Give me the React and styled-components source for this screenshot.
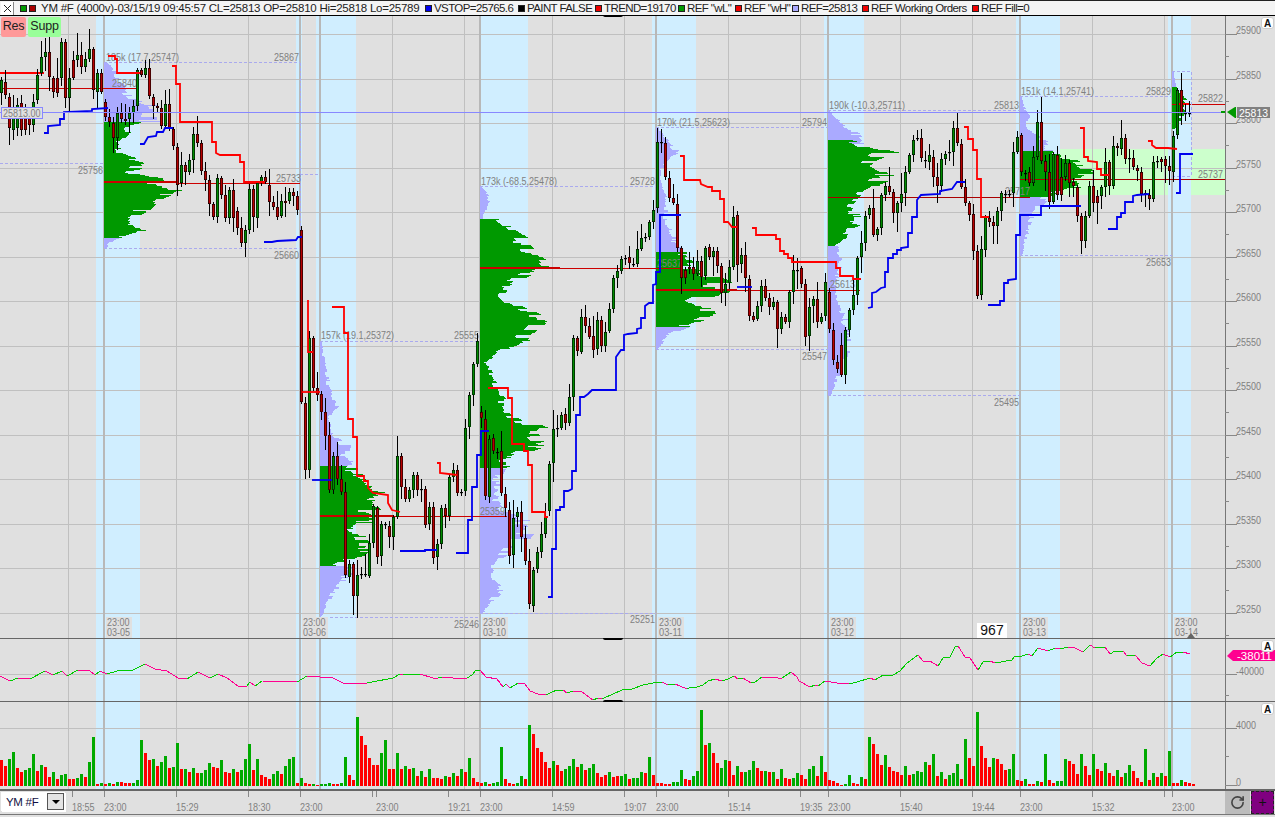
import React from "react";
import styled, { createGlobalStyle } from "styled-components";
import { RotateCw } from "lucide-react";

const GlobalStyle = createGlobalStyle`
  html, body { margin: 0; padding: 0; background: #e0e0e0; overflow: hidden; }
  #root { width: 1275px; height: 817px; }
`;

const FONT = `"Liberation Sans", Arial, sans-serif`;
const PLOT_W = 1225;
const AXIS_W = 50;

const Page = styled.div`
  width: 1275px;
  height: 817px;
  display: flex;
  flex-direction: column;
  background: #e0e0e0;
  font-family: ${FONT};
`;

const TitleBar = styled.div`
  height: 14px;
  flex: none;
  display: flex;
  align-items: center;
  background: #f4f4f4;
  border-top: 1px solid #222;
  border-bottom: 1px solid #000;
  font-size: 11.5px;
  color: #222;
  white-space: nowrap;
`;

const CloseBox = styled.div`
  width: 13px;
  height: 13px;
  margin: 0 6px 0 1px;
  box-sizing: border-box;
  border-right: 1px solid #888;
  background: #fff;
  display: flex;
  align-items: center;
  justify-content: center;
`;

const Instrument = styled.div`
  display: flex;
  align-items: center;
  width: 405px;
  flex: none;
  letter-spacing: -0.25px;
`;

const Legend = styled.div`
  display: flex;
  align-items: center;
  width: ${(p) => p.$width}px;
  flex: none;
  letter-spacing: -0.6px;
`;

const Swatch = styled.span`
  display: inline-block;
  box-sizing: border-box;
  width: 7px;
  height: 7px;
  border: 1px solid #222;
  background: ${(p) => p.$color};
  margin-right: ${(p) => p.$right || 2}px;
`;

const PaneRow = styled.div`
  height: ${(p) => p.$height}px;
  flex: none;
  display: flex;
  box-sizing: border-box;
  border-top: ${(p) => (p.$line ? "1px solid #666" : "0")};
`;

const Plot = styled.div`
  position: relative;
  width: ${PLOT_W}px;
  height: 100%;
  flex: none;
`;

const Axis = styled.div`
  position: relative;
  width: ${AXIS_W}px;
  height: 100%;
  flex: none;
  box-sizing: border-box;
`;

const Drawing = styled.svg`
  display: block;
  width: 100%;
  height: 100%;
  overflow: hidden;
  font-family: ${FONT};
`;

const PriceLabel = styled.text`
  font-size: 11px;
  fill: ${(p) => p.$color || "#808080"};
`;

const AutoButton = styled.div`
  position: absolute;
  top: 1px;
  right: 1px;
  width: 13px;
  height: 12px;
  border-radius: 3px;
  background: #fff;
  border: 1px solid #ccc;
  box-sizing: border-box;
  font-size: 10px;
  font-weight: bold;
  line-height: 11px;
  text-align: center;
  color: #111;
`;

const LevelButtons = styled.div`
  position: absolute;
  left: 1px;
  top: 1px;
  display: flex;
  gap: 2px;
`;

const LevelButton = styled.div`
  width: ${(p) => p.$width}px;
  height: 20px;
  border-radius: 2px;
  background: ${(p) => p.$color};
  color: #222;
  font-size: 12.5px;
  letter-spacing: -0.2px;
  line-height: 19px;
  text-align: center;
`;

const Counter = styled.div`
  position: absolute;
  left: 977px;
  bottom: 0;
  width: 30px;
  height: 15px;
  background: #fff;
  color: #111;
  font-size: 14px;
  line-height: 15px;
  text-align: center;
`;

const Grip = styled.div`
  position: absolute;
  left: 603px;
  ${(p) => (p.$bottom ? "bottom: -1px" : "top: -1px")};
  width: 20px;
  height: 2px;
  background: #000;
  border-radius: ${(p) => (p.$bottom ? "3px 3px 0 0" : "0 0 3px 3px")};
`;

const TimeRow = styled.div`
  height: 26px;
  flex: none;
  display: flex;
  box-sizing: border-box;
  border-top: 2px solid #666;
  border-bottom: 1px solid #777;
`;

const SymbolBox = styled.div`
  width: 64px;
  flex: none;
  box-sizing: border-box;
  margin: 1px 1px 3px 1px;
  border: 1px solid #fff;
  box-shadow: 1px 1px 0 #fff;
  background: #fff;
  display: flex;
  align-items: center;
  justify-content: space-between;
  font-size: 11.5px;
  letter-spacing: -0.3px;
  color: #114;
`;

const SymbolName = styled.span`
  padding-left: 4px;
`;

const SymbolArrow = styled.div`
  width: 17px;
  height: 17px;
  box-sizing: border-box;
  background: #e4e4e4;
  border: 1px solid #555;
  display: flex;
  align-items: center;
  justify-content: center;
  &::after {
    content: "";
    border-left: 4px solid transparent;
    border-right: 4px solid transparent;
    border-top: 4px solid #000;
  }
`;

const TimeAxis = styled.div`
  width: ${PLOT_W - 66}px;
  flex: none;
`;

const RefreshButton = styled.div`
  width: 25px;
  flex: none;
  background: #bcbcbc;
  display: flex;
  align-items: center;
  justify-content: center;
  color: #444;
`;

const PlusButton = styled.div`
  width: 23px;
  flex: none;
  margin-left: 1px;
  box-sizing: border-box;
  background: #800080;
  border: 1px dashed #222;
  color: #111;
  font-size: 14px;
  line-height: 21px;
  text-align: center;
`;

// tiny seeded random so every render gives the same chart
const makeRng = (seed) => () => {
  seed = (seed * 16807) % 2147483647;
  return seed / 2147483647;
};

// candle bodies, read per zoomed section: y = y0 + z / 3
const CANDLE_SECTIONS = [
  {
    y0: 30,
    bars: `g150-190 r155-195 r200-295 g240-300 g225-295 r220-300 r235-300 r255-285 g215-285 g135-210 g80-130 g65-80 r65-140 r145-185 r145-190 g35-145 r35-205 g145-205 r90-145 g75-90 r75-110 g88-110 g58-88 r58-180 g130-185 r130-185 r215-260 r262-275 r278-325 g250-325 r250-268 r268-272 g250-268 g228-250 g120-228 r120-135 g113-135 r113-198 r200-228 r228-235 r235-288 g222-288 r222-295 r298-347 r350-465 g405-458 r405-425 g390-425 g312-390 r312-338 r340-422 r423-450 r450-522 r522-560 g445-560 r445-495 r495-565 g480-565 r480-565 r543-595 r595-640 g600-640 g478-600 r478-562 g460-565 g442-460 r442-455 r465-515 r515-530 r530-560 g513-558 r513-520 g487-513 r487-497 r497-540`,
  },
  {
    y0: 300,
    bars: `r-210-305 r308-510 g115-510 r115-265 r265-285 r283-335 r335-408 r405-570 g468-570 r468-536 r538-575 r577-825 g793-830 r793-887 g825-887 d823 d823 g730-827 g618-730 r625-770 g672-768 d672 r678-710 g650-710 g468-650 r468-560 r562-597 g570-597 g525-570 r525-570 d567 r567-675 g622-672 r622-775 g733-772 g625-733 r625-648 g532-648 g510-532 r510-578 d575 g385-572 g285-382 g193-285 g123-193 r337-355 r357-587 g418-590 r415-452 d455 r453-580 r583-625 r630-768 g655-765 g637-650 r637-712 r715-782 r783-913 g810-917 g757-808 g703-755 g650-702 g492-632 g388-490 d385 g345-383 r342-368 g292-368 g115-290 r115-152`,
  },
  {
    y0: 120,
    bars: `g590-695 r590-617 r618-650 r648-690 g600-688 r600-678 g637-678 g567-632 g475-567 g453-473 g418-452 d413 r411-428 d431 g388-431 g355-386 d350 g307-350 g270-305 g65-265 d65 r70-172 r175-233 r233-248 r253-385 r385-473 r450-475 r442-448 r442-463 g424-463 r424-470 g385-468 r382-410 g394-410 r394-437 r437-520 g493-520 g442-490 g290-440 r286-435 g405-433 r405-473 r478-587 r589-599 g558-598 g498-557 r498-533 r535-562 g547-562 r547-628 g590-628 r590-606 g517-605 g451-515 d449 r445-492 r492-650 g562-648 g538-557 r538-605 g590-605 g487-587 r517-628 r630-720 r727-748`,
  },
  {
    y0: 100,
    bars: `r735-825 g690-825 g630-690 g585-630 g475-585 g430-472 g347-428 g325-345 r325-405 g388-405 g285-385 g258-285 r258-275 r277-338 g310-340 g283-310 g217-278 g165-215 g120-165 d115 r115-175 d180 g165-185 r170-230 r232-257 g178-257 g162-178 d157 g85-155 r85-130 r133-260 r262-308 r310-345 r343-452 r453-587 g448-585 g352-450 r353-365 r367-377 g333-377 g280-332 d282 d282 g157-280 g112-155 r105-215 d218 r217-250 g172-250 g67-170 r67-182 r183-215 r217-306 g163-306 r165-285 r232-285 g190-232 r190-248 r246-258 r262-347 r349-422 g349-422 g258-347 r258-310 r288-310 g262-288 g187-260 r187-258 g138-258 r138-145 g115-148 r115-178 d173 r173-202 r205-212 r217-282 d280 r286-296 g187-296 d183 r178-186 r178-198 r198-212 g108-215 g-30-105 r-30-39 d40 d40`,
  },
];

// the few wicks that stick out far enough to be worth placing by hand
const WICK_OVERRIDE = {
  22: { high: 29 },
  11: { high: 38 },
  15: { high: 38 },
  88: { low: 615 },
  133: { low: 612 },
  165: { high: 129 },
  194: { low: 348 },
  239: { high: 113 },
  245: { low: 300 },
  260: { high: 97 },
  270: { low: 254 },
  295: { high: 73 },
};

const buildCandles = () => {
  const rng = makeRng(4711);
  const out = [];
  CANDLE_SECTIONS.forEach(({ y0, bars }) => {
    bars.split(/\s+/).forEach((token) => {
      const m = token.match(/^([grd])(-?\d+)(?:-(-?\d+))?$/);
      const top = y0 + Number(m[2]) / 3;
      const bottom = m[3] ? y0 + Number(m[3]) / 3 : top + 1;
      const i = out.length;
      out.push({
        x: 4 * i + 1,
        top: Math.round(top),
        bottom: Math.round(bottom),
        color: m[1] === "g" ? "#008c00" : m[1] === "r" ? "#b80000" : "#000",
        high: Math.round(top - 2 - rng() * rng() * 22),
        low: Math.round(bottom + 2 + rng() * rng() * 22),
        ...WICK_OVERRIDE[i],
      });
    });
  });
  return out;
};

const CANDLES = buildCandles();

const VOLUME = `r26 r20 g27 g34 r18 r14 g16 g18 g32 r15 g21 r19 r9 g14 r7 g11 g12 r7 r7 g8 g12 r9 g24 g49 r2 g3 r2 g3 r2 g4 r4 r3 r3 g3 g6 g46 r33 r26 g27 r20 g24 g30 r18 g19 g43 r17 g17 r14 g18 r13 g13 g16 g23 r19 r18 g26 r14 r13 g17 r14 g16 g27 g42 r16 g27 r11 r9 r7 g12 g15 r12 g20 g27 g29 r3 g8 r3 r2 g2 r1 g2 g2 g3 r2 r2 g3 g29 r11 r6 g69 r50 r41 r28 r21 r21 g33 g46 r17 r17 g33 r17 g20 r17 g18 r10
g15 r9 g17 r8 r8 r7 g10 r9 g13 r10 g17 r14 g28 r8 r4 r3 g4 r2 g3 g4 g39 r7 r3 r2 g3 g10 r7 g61 r52 r38 r34 r24 r18 g25 r21 r15 g17 g20 g27 r19 g22 r16 g18 g22 r13 r9 r11 g14 r9 r10 g10 g12 r7 g8 g8 g14 r13 g29 r11 r3 r3 r2 r2 g4 g4 g16 r7 r6 g10 g15 g76 r41 g43 r33 r23 g18 g26 r25 r11 g20 r14 g14 g16 g25 r18 r15 g15 r14 g14 r7 g17 r8 r7 g8 g13 r11 r7 g17 g20 r10 g30 r14 r6 r5 r3 r1 g2 g11 r3 r2
g9 r7 g49 r42 r32 r21 g31 r19 r15 r14 r11 g20 r11 g12 g15 g14 g24 r21 g32 r10 g14 r7 g11 g13 g22 r7 g47 r28 r20 g74 r40 r28 r19 g28 r27 r22 r16 g17 g32 r6 r5 g7 r2 r2 g5 r4 g32 r6 r3 g5 g5 g27 r25 r22 r12 g32 r20 r11 g32 r17 r15 g23 r13 r10 g16 r9 g13 g21 r15 r8 r4 g37 r6 g13 r9 g13 r10 g35 r3 r3 g6 r4 r3 r2`
  .split(/\s+/)
  .map((t) => ({ color: t[0] === "g" ? "#00aa00" : "#ff0000", h: Number(t.slice(1)) }));

// middle stretch of the line, taken from a crop: x = 400 + z / 3, y = 655 + z / 3
const RSI_MIDDLE = [
  [0, 58], [8, 60], [35, 56], [60, 56], [100, 68], [115, 70], [125, 65], [160, 70], [185, 68], [200, 70], [215, 60], [228, 46], [240, 46], [258, 66],
  [290, 72], [308, 97], [318, 88], [330, 100], [355, 85], [375, 87], [390, 108], [415, 118], [437, 120], [455, 110], [470, 106], [488, 106], [500, 115],
  [520, 107], [545, 112], [580, 135], [595, 130], [607, 133], [640, 118], [665, 104], [695, 103], [730, 90], [760, 83], [785, 80], [805, 90], [825, 88],
  [860, 103], [872, 95], [890, 97], [910, 90], [925, 77], [945, 73], [965, 78], [985, 72], [1003, 62], [1015, 73], [1030, 68], [1052, 85], [1065, 80],
  [1087, 65], [1135, 70], [1147, 70], [1172, 50], [1190, 65], [1197, 78], [1230, 97], [1245, 90], [1255, 94], [1275, 79], [1310, 85], [1348, 87],
  [1370, 80], [1410, 68],
].map(([x, y]) => [Math.round(400 + x / 3), Math.round(655 + y / 3)]);

const RSI_POINTS = [
  [0, 676], [10, 681], [18, 678], [30, 679], [45, 671], [53, 675], [62, 671], [67, 676], [78, 670], [90, 671], [95, 675], [100, 671], [107, 674],
  [117, 671], [133, 670], [145, 664], [155, 669], [167, 671], [178, 678], [187, 679], [198, 672], [210, 678], [218, 674], [227, 678], [238, 686],
  [247, 686], [250, 682], [255, 686], [262, 681], [297, 682], [307, 676], [320, 677], [333, 678], [343, 683], [367, 683], [393, 678],
  ...RSI_MIDDLE,
  [875, 680], [883, 675], [893, 675], [900, 671],
  [907, 663], [918, 655], [923, 661], [930, 661], [938, 666], [943, 658], [950, 657], [955, 647], [958, 646], [965, 657], [970, 658], [978, 670],
  [983, 662], [990, 661], [995, 663], [1012, 660], [1015, 656], [1022, 656], [1028, 654], [1032, 656], [1038, 648], [1048, 651], [1055, 648],
  [1060, 649], [1068, 647], [1075, 648], [1083, 652], [1090, 645], [1095, 648], [1105, 647], [1110, 654], [1115, 651], [1123, 651], [1127, 656],
  [1135, 655], [1142, 663], [1150, 666], [1157, 658], [1163, 654], [1170, 657], [1177, 652], [1183, 652], [1190, 654],
];

const BANDS = [[96, 140], [296, 302], [316, 356], [480, 528], [652, 696], [824, 864], [1016, 1060], [1168, 1191]];
const THIN_X = [68, 176, 248, 392, 464, 552, 624, 728, 800, 900, 972, 1092, 1164];
const THICK_X = [104, 300, 320, 480, 656, 828, 1020, 1172];
const GRID_Y = [34, 79, 123, 168, 212, 257, 301, 346, 390, 435, 479, 524, 568, 613];
const PRICE_TICKS = [25900, 25850, 25800, 25750, 25700, 25650, 25600, 25550, 25500, 25450, 25400, 25350, 25300, 25250];

const PROFILES = [
  { x: 104, seed: 11, color: "#aaaaff", pts: [[62, 4], [70, 12], [80, 18], [90, 24], [100, 36], [105, 52], [112, 55], [121, 56]] },
  { x: 104, seed: 12, color: "#009900", pts: [[122, 56], [126, 30], [135, 26], [145, 14], [152, 18], [157, 32], [165, 42], [172, 30], [178, 60], [183, 68], [190, 76], [197, 62], [205, 48], [212, 42], [222, 30], [230, 40], [238, 14]] },
  { x: 104, seed: 13, color: "#aaaaff", pts: [[238, 14], [243, 6], [248, 2]] },
  { x: 320, seed: 21, color: "#aaaaff", pts: [[341, 2], [355, 4], [370, 8], [385, 10], [395, 14], [405, 20], [420, 10], [435, 14], [445, 30], [455, 30], [465, 36]] },
  { x: 320, seed: 22, color: "#009900", pts: [[466, 36], [475, 44], [480, 58], [485, 72], [490, 62], [497, 75], [505, 58], [512, 60], [516, 73], [522, 52], [527, 42], [535, 50], [545, 52], [555, 46], [565, 16]] },
  { x: 320, seed: 23, color: "#aaaaff", pts: [[566, 34], [575, 30], [585, 20], [595, 14], [605, 6], [617, 2]] },
  { x: 480, seed: 31, color: "#aaaaff", pts: [[187, 2], [192, 8], [200, 10], [210, 6], [218, 4]] },
  { x: 480, seed: 32, color: "#009900", pts: [[219, 22], [228, 34], [240, 50], [255, 62], [268, 80], [275, 52], [285, 32], [295, 26], [305, 40], [315, 60], [323, 68], [332, 60], [342, 46], [352, 20], [362, 6], [375, 14], [390, 20], [398, 28], [410, 30], [420, 50], [428, 66], [436, 60], [444, 72], [452, 50], [460, 30], [467, 28]] },
  { x: 480, seed: 33, color: "#aaaaff", pts: [[468, 28], [480, 20], [490, 22], [500, 18], [510, 28], [518, 46], [528, 60], [535, 54], [545, 40], [555, 26], [565, 14], [580, 16], [590, 26], [600, 14], [612, 4]] },
  { x: 656, seed: 41, color: "#aaaaff", pts: [[127, 2], [135, 8], [143, 16], [150, 26], [157, 14], [170, 6], [185, 6], [195, 10], [205, 14], [215, 10], [230, 16], [245, 26], [251, 28]] },
  { x: 656, seed: 42, color: "#009900", pts: [[252, 32], [260, 36], [270, 44], [280, 72], [288, 76], [294, 68], [300, 46], [305, 58], [315, 64], [320, 48], [326, 32]] },
  { x: 656, seed: 43, color: "#aaaaff", pts: [[327, 36], [333, 18], [340, 10], [349, 2]] },
  { x: 828, seed: 51, color: "#aaaaff", pts: [[110, 2], [118, 8], [125, 20], [133, 34], [139, 40], [143, 36]] },
  { x: 828, seed: 52, color: "#009900", pts: [[140, 24], [147, 50], [152, 70], [158, 56], [165, 44], [172, 60], [178, 68], [185, 52], [192, 38], [200, 28], [207, 22], [215, 32], [222, 34], [230, 24], [238, 18], [245, 8]] },
  { x: 828, seed: 53, color: "#aaaaff", pts: [[246, 10], [258, 16], [270, 12], [285, 8], [300, 10], [315, 18], [330, 24], [345, 22], [360, 20], [375, 12], [395, 3]] },
  { x: 1020, seed: 61, color: "#aaaaff", pts: [[97, 2], [108, 6], [115, 12], [125, 8], [132, 14], [140, 30], [146, 40], [150, 32]] },
  { x: 1020, seed: 62, color: "#009900", pts: [[151, 46], [156, 52], [162, 60], [168, 70], [175, 80], [180, 70], [187, 64], [193, 40], [196, 36]] },
  { x: 1020, seed: 63, color: "#aaaaff", pts: [[197, 30], [205, 22], [220, 12], [235, 8], [255, 2]] },
  { x: 1172, seed: 71, color: "#aaaaff", pts: [[72, 2], [80, 4], [86, 5]] },
  { x: 1172, seed: 72, color: "#009900", pts: [[87, 6], [95, 12], [102, 16], [110, 14], [118, 10], [128, 4]] },
];

// rows come in little runs of the same width, which gives the blocky look of the histogram
const profilePath = ({ x, seed, pts }) => {
  const rng = makeRng(seed * 1231);
  let d = "";
  let seg = 0;
  let run = 0;
  let factor = 1;
  const bottom = pts[pts.length - 1][0];
  for (let y = pts[0][0]; y <= bottom; y++) {
    while (seg < pts.length - 2 && y > pts[seg + 1][0]) seg++;
    const [y1, w1] = pts[seg];
    const [y2, w2] = pts[seg + 1];
    const base = w1 + ((w2 - w1) * (y - y1)) / (y2 - y1 || 1);
    if (run-- <= 0) {
      run = Math.floor(rng() * 3);
      factor = 0.62 + rng() * 0.44;
    }
    const w = Math.max(1, Math.round(base * factor));
    d += `M${x} ${y}h${w}v1h-${w}z`;
  }
  return d;
};

const DASHED = [
  [0, 163, 104, 163], [104, 62, 300, 62], [104, 248, 300, 248], [300, 174, 320, 174], [320, 341, 478, 341], [320, 617, 480, 617],
  [480, 186, 656, 186], [480, 613, 656, 613], [656, 127, 828, 127], [656, 349, 828, 349], [828, 110, 1020, 110], [828, 395, 1020, 395],
  [1020, 96, 1172, 96], [1020, 255, 1172, 255], [1172, 71, 1191, 71], [1172, 176, 1191, 176], [1191, 71, 1191, 176], [300, 62, 300, 248],
];

const REF_LINES = [
  { p: [[0, 73], [44, 73]], c: "#ff0000", w: 2 },
  { p: [[0, 88], [136, 88]], c: "#cc0000", w: 1 },
  { p: [[104, 182], [178, 182]], c: "#cc0000", w: 2 },
  { p: [[178, 183], [300, 183]], c: "#cc0000", w: 1 },
  { p: [[320, 516], [393, 516]], c: "#cc0000", w: 2 },
  { p: [[393, 516], [507, 516]], c: "#cc0000", w: 1 },
  { p: [[480, 268], [560, 268]], c: "#cc0000", w: 2 },
  { p: [[560, 268], [680, 268]], c: "#cc0000", w: 1 },
  { p: [[656, 290], [737, 290]], c: "#cc0000", w: 2 },
  { p: [[737, 290], [860, 290]], c: "#cc0000", w: 1 },
  { p: [[828, 197], [1030, 197]], c: "#aa0000", w: 1 },
  { p: [[1020, 179], [1225, 179]], c: "#aa0000", w: 1 },
  { p: [[1172, 104], [1225, 104]], c: "#cc0000", w: 1 },
  { p: [[1178, 104], [1190, 104]], c: "#ff0000", w: 2 },
];

const TREND_RED = [
  [[108, 56], [115, 56], [115, 59], [117, 59], [117, 73], [140, 73]],
  [[172, 66], [176, 66], [176, 84], [180, 84], [180, 122], [212, 122], [212, 142], [216, 142], [216, 153], [220, 155], [240, 155], [240, 162], [244, 162], [244, 182], [265, 182]],
  [[332, 307], [344, 307], [344, 333], [348, 333], [348, 419], [353, 419], [353, 437], [357, 437], [357, 476], [364, 476], [364, 481], [368, 481], [368, 488], [373, 493], [388, 495], [388, 503], [392, 510], [400, 512]],
  [[308, 300], [308, 352], [313, 352]],
  [[302, 392], [320, 392]],
  [[437, 463], [440, 463], [440, 473], [457, 475]],
  [[488, 388], [508, 388], [508, 398], [512, 398], [512, 444], [524, 444], [524, 451], [528, 451], [528, 465], [532, 465], [532, 512], [545, 512], [545, 517], [548, 517]],
  [[680, 156], [684, 156], [684, 180], [700, 180], [701, 184], [708, 187], [712, 187], [712, 191], [720, 191], [720, 199], [724, 199], [724, 222], [728, 222], [732, 227], [737, 227]],
  [[752, 228], [756, 228], [756, 235], [776, 235], [776, 239], [780, 239], [780, 251], [784, 251], [784, 254], [788, 254], [788, 258], [792, 258], [792, 262], [836, 262], [836, 268], [840, 268], [840, 276], [853, 276], [853, 279], [861, 279]],
  [[964, 127], [968, 127], [968, 139], [973, 139], [973, 150], [977, 150], [977, 179], [981, 179], [981, 217], [989, 217]],
  [[1080, 128], [1084, 128], [1084, 157], [1088, 157], [1088, 161], [1097, 162], [1097, 169], [1101, 169], [1101, 175], [1109, 175]],
  [[1148, 141], [1152, 141], [1152, 145], [1156, 148], [1168, 148], [1177, 149]],
];

const VSTOP_BLUE = [
  [[44, 133], [48, 133], [48, 126], [60, 125], [60, 119], [64, 119], [64, 112], [92, 111], [92, 109], [108, 108]],
  [[140, 144], [144, 144], [148, 137], [156, 136], [157, 132], [163, 132], [165, 128], [173, 128]],
  [[264, 242], [272, 242], [277, 241], [296, 240], [298, 237], [302, 237]],
  [[312, 480], [332, 480]],
  [[400, 551], [425, 551], [425, 550], [437, 550]],
  [[456, 553], [468, 553], [468, 520], [472, 520], [472, 487], [477, 487], [477, 455], [481, 455], [481, 431], [489, 431]],
  [[548, 597], [552, 597], [552, 549], [556, 549], [556, 510], [560, 510], [560, 507], [564, 507], [564, 491], [568, 491], [572, 489], [572, 471], [576, 471], [576, 415], [580, 415], [580, 397], [584, 397], [588, 394], [592, 390], [616, 390], [616, 357], [621, 350], [624, 350], [624, 335], [628, 334], [637, 333], [637, 329], [641, 328], [641, 318], [645, 318], [645, 306], [649, 303], [653, 303], [653, 285], [656, 284], [656, 272], [660, 272], [660, 215], [681, 215]],
  [[737, 287], [752, 287]],
  [[868, 308], [872, 307], [872, 293], [876, 292], [881, 288], [885, 287], [885, 272], [888, 272], [888, 258], [893, 258], [893, 254], [897, 254], [897, 250], [901, 250], [901, 248], [908, 247], [908, 233], [912, 233], [912, 217], [917, 217], [917, 200], [921, 195], [940, 194], [940, 191], [952, 189], [957, 182], [965, 182]],
  [[988, 305], [1000, 305], [1000, 301], [1004, 301], [1004, 283], [1008, 283], [1008, 280], [1016, 279], [1016, 235], [1020, 235], [1020, 215], [1041, 215], [1041, 206], [1081, 206]],
  [[1108, 229], [1117, 229], [1117, 217], [1121, 217], [1121, 213], [1125, 213], [1125, 202], [1133, 202], [1133, 196], [1137, 195], [1149, 194]],
  [[1176, 193], [1180, 193], [1180, 154], [1193, 154]],
];

const LABELS = [
  ["185k (17.7,25747)", 106, 61], ["25867", 274, 61], ["25840", 112, 87], ["25756", 78, 174], ["25733", 276, 182], ["25660", 274, 259],
  ["157k (19.1,25372)", 321, 339], ["25555", 454, 339], ["25246", 454, 628], ["173k (-68.5,25478)", 481, 185], ["25728", 630, 185],
  ["25359", 480, 515], ["25251", 630, 623], ["170k (21.5,25623)", 657, 126], ["25794", 802, 126], ["25637", 657, 267], ["25613", 830, 288],
  ["25547", 802, 360], ["190k (-10.3,25711)", 829, 109], ["25813", 994, 109], ["25717", 1005, 195], ["25495", 994, 406],
  ["151k (14.1,25741)", 1021, 95], ["25829", 1146, 95], ["25653", 1146, 266], ["25822", 1198, 102], ["25737", 1198, 178],
];

const SESSION_TAGS = [[107, "03-05"], [303, "03-06"], [483, "03-10"], [659, "03-11"], [831, "03-12"], [1023, "03-13"], [1175, "03-14"]];

const TIME_TICKS = [
  [72, "18:55"], [104, "23:00"], [176, "15:29"], [248, "18:30"], [300, "23:00"], [372], [376, "23:00"], [448, "19:21"], [480, "23:00"], [552, "14:59"],
  [624, "19:07"], [656, "23:00"], [728, "15:14"], [800, "19:35"], [828, "23:00"], [900, "15:40"], [972, "19:44"], [1020, "23:00"], [1092, "15:32"], [1164], [1172, "23:00"],
];

const LEGEND = [
  { color: "#0000ee", text: "VSTOP=25765.6", width: 93 },
  { color: "#000", text: "PAINT FALSE", width: 77 },
  { color: "#ee0000", text: "TREND=19170", width: 83 },
  { color: "#009900", text: 'REF "wL"', width: 57 },
  { color: "#ee0000", text: 'REF "wH"', width: 57 },
  { color: "#aaaaff", text: "REF=25813", width: 70 },
  { color: "#ee0000", text: "REF Working Orders", width: 110 },
  { color: "#ee0000", text: "REF Fill=0", width: 60 },
];

// the reference font is narrow, so squeeze the labels to its widths
const textWidth = (s) =>
  [...s].reduce((sum, c) => sum + (/[0-9k]/.test(c) ? 5 : /[().,: ]/.test(c) ? 2.6 : 3), 0);

const Tag = ({ x, y, children, color, width }) => (
  <PriceLabel x={x} y={y} $color={color} textLength={width || textWidth(children)} lengthAdjust="spacingAndGlyphs">
    {children}
  </PriceLabel>
);

const points = (p) => p.map((q) => q.join(",")).join(" ");

const Backdrop = ({ y1, y2, hLines }) => (
  <g shapeRendering="crispEdges">
    {BANDS.map(([a, b]) => (
      <rect key={a} x={a} y={y1} width={b - a} height={y2 - y1} fill="#d0eeff" />
    ))}
    {hLines.map((y) => (
      <line key={y} x1={0} x2={PLOT_W} y1={y + 0.5} y2={y + 0.5} stroke="#c0c0c0" />
    ))}
    {THIN_X.map((x) => (
      <line key={x} x1={x + 0.5} x2={x + 0.5} y1={y1} y2={y2} stroke="#c0c0c0" />
    ))}
    {THICK_X.map((x) => (
      <line key={x} x1={x} x2={x} y1={y1} y2={y2} stroke="#b8b8b8" strokeWidth={2} />
    ))}
  </g>
);

const Candle = ({ c }) => (
  <g>
    <line x1={c.x + 0.5} x2={c.x + 0.5} y1={c.high} y2={c.low} stroke="#000" shapeRendering="crispEdges" />
    <rect x={c.x - 1} y={c.top} width={3} height={Math.max(1, c.bottom - c.top)} fill={c.color} shapeRendering="crispEdges" />
    <rect x={c.x - 0.7} y={c.top + 0.3} width={2.4} height={Math.max(0.6, c.bottom - c.top - 0.6)} fill="none" stroke="#000" strokeWidth={0.6} />
  </g>
);

const MainChart = () => (
  <Drawing viewBox="0 16 1225 622" preserveAspectRatio="none">
    <rect x={1020} y={149} width={205} height={46} fill="#ccffcc" />
    <Backdrop y1={16} y2={638} hLines={GRID_Y} />
    {PROFILES.map((p) => (
      <path key={p.seed} d={profilePath(p)} fill={p.color} shapeRendering="crispEdges" />
    ))}
    {REF_LINES.map((l, i) => (
      <polyline key={i} points={points(l.p)} fill="none" stroke={l.c} strokeWidth={l.w} shapeRendering="crispEdges" />
    ))}
    <g stroke="#aaaaee" strokeDasharray="3 2" shapeRendering="crispEdges">
      {DASHED.map(([x1, y1, x2, y2], i) => (
        <line key={i} x1={x1} y1={y1 + 0.5} x2={x2} y2={y2 + 0.5} />
      ))}
    </g>
    {LABELS.map(([text, x, y]) => (
      <Tag key={text + x} x={x} y={y}>
        {text}
      </Tag>
    ))}
    {SESSION_TAGS.map(([x, date]) => (
      <g key={date}>
        <rect x={x - 1} y={617} width={26} height={21} fill="#e0e0e0" />
        <Tag x={x} y={626}>23:00</Tag>
        <Tag x={x} y={636}>{date}</Tag>
      </g>
    ))}
    <polygon points="1187,638 1191,633 1195,638" fill="#666" />
    {CANDLES.map((c) => (
      <Candle key={c.x} c={c} />
    ))}
    {TREND_RED.map((p, i) => (
      <polyline key={i} points={points(p)} fill="none" stroke="#ff0000" strokeWidth={1.8} />
    ))}
    {VSTOP_BLUE.map((p, i) => (
      <polyline key={i} points={points(p)} fill="none" stroke="#0000ee" strokeWidth={1.8} />
    ))}
    <line x1={0} x2={PLOT_W} y1={112.5} y2={112.5} stroke="#8888ff" shapeRendering="crispEdges" />
    <rect x={1.5} y={107.5} width={41} height={11} fill="#e0e0e0" stroke="#8888ff" shapeRendering="crispEdges" />
    <Tag x={3} y={117}>25813.00</Tag>
    <rect x={1221} y={111} width={4} height={2} fill="#009900" />
  </Drawing>
);

const MainAxis = () => (
  <Drawing viewBox="1225 16 50 622" preserveAspectRatio="none">
    <line x1={1225.5} x2={1225.5} y1={16} y2={638} stroke="#777" shapeRendering="crispEdges" />
    <g stroke="#888" shapeRendering="crispEdges">
      {GRID_Y.map((y) => (
        <g key={y}>
          <line x1={1225} x2={1237} y1={y + 0.5} y2={y + 0.5} />
          <line x1={1225} x2={1229} y1={y + 22.5} y2={y + 22.5} />
        </g>
      ))}
    </g>
    {PRICE_TICKS.map((p, i) => (
      <Tag key={p} x={1236} y={GRID_Y[i]}>
        {String(p)}
      </Tag>
    ))}
    <polygon points="1227,112 1235,107 1236,107 1236,118 1235,118" fill="#009900" />
    <rect x={1237} y={107} width={33} height={11} fill="#808080" />
    <Tag x={1239} y={117} color="#fff" width={29}>25813</Tag>
  </Drawing>
);

const RsiPane = () => {
  const segs = [];
  let up = true;
  for (let i = 1; i < RSI_POINTS.length; i++) {
    const [x1, y1] = RSI_POINTS[i - 1];
    const [x2, y2] = RSI_POINTS[i];
    // a flat stretch keeps the colour of the move before it
    if (y2 !== y1) up = y2 < y1;
    segs.push({ x1, y1, x2, y2, up });
  }
  return (
    <Drawing viewBox="0 639 1225 62" preserveAspectRatio="none">
      <Backdrop y1={639} y2={701} hLines={[674]} />
      <g shapeRendering="crispEdges">
        {segs.map((s) => (
          <line key={s.x1} x1={s.x1} y1={s.y1} x2={s.x2} y2={s.y2} stroke={s.up ? "#00cc00" : "#ff0090"} />
        ))}
      </g>
    </Drawing>
  );
};

const RsiAxis = () => (
  <Drawing viewBox="1225 639 50 62" preserveAspectRatio="none">
    <line x1={1225.5} x2={1225.5} y1={639} y2={701} stroke="#777" shapeRendering="crispEdges" />
    <g stroke="#888" shapeRendering="crispEdges">
      <line x1={1225} x2={1237} y1={674.5} y2={674.5} />
      <line x1={1225} x2={1229} y1={695.5} y2={695.5} />
    </g>
    <Tag x={1236} y={675}>-40000</Tag>
    <polygon points="1227,656 1233,650 1275,650 1275,661 1233,661" fill="#ff0090" />
    <Tag x={1237} y={660} color="#fff" width={35}>-38011</Tag>
  </Drawing>
);

const VolumePane = () => (
  <Drawing viewBox="0 702 1225 87" preserveAspectRatio="none">
    <Backdrop y1={702} y2={789} hLines={[728]} />
    <g shapeRendering="crispEdges">
      {VOLUME.map((v, i) => (
        <rect key={i} x={4 * i} y={786 - v.h} width={3} height={v.h} fill={v.color} />
      ))}
    </g>
  </Drawing>
);

const VolumeAxis = () => (
  <Drawing viewBox="1225 702 50 87" preserveAspectRatio="none">
    <line x1={1225.5} x2={1225.5} y1={702} y2={789} stroke="#777" shapeRendering="crispEdges" />
    <g stroke="#888" shapeRendering="crispEdges">
      <line x1={1225} x2={1237} y1={728.5} y2={728.5} />
      <line x1={1225} x2={1229} y1={756.5} y2={756.5} />
      <line x1={1225} x2={1237} y1={785.5} y2={785.5} />
    </g>
    <Tag x={1236} y={729}>4000</Tag>
    <Tag x={1236} y={786}>0</Tag>
  </Drawing>
);

const TimeScale = () => (
  <Drawing viewBox="66 791 1159 23" preserveAspectRatio="none">
    {TIME_TICKS.map(([x, label]) => (
      <g key={x}>
        <line x1={x + 0.5} x2={x + 0.5} y1={791} y2={797} stroke="#888" shapeRendering="crispEdges" />
        {label && (
          <Tag x={x} y={811}>
            {label}
          </Tag>
        )}
      </g>
    ))}
  </Drawing>
);

const App = () => (
  <Page>
    <GlobalStyle />
    <TitleBar>
      <CloseBox>
        <svg width="9" height="9" viewBox="0 0 9 9">
          <path d="M1 1l7 7M8 1l-7 7" stroke="#222" strokeWidth="1" />
        </svg>
      </CloseBox>
      <Instrument>
        <Swatch $color="#009900" />
        <Swatch $color="#aa0000" $right={5} />
        YM #F (4000v)-03/15/19 09:45:57 CL=25813 OP=25810 Hi=25818 Lo=25789
      </Instrument>
      {LEGEND.map((item) => (
        <Legend key={item.text} $width={item.width}>
          <Swatch $color={item.color} />
          {item.text}
        </Legend>
      ))}
    </TitleBar>
    <PaneRow $height={622}>
      <Plot>
        <MainChart />
        <LevelButtons>
          <LevelButton $color="#ff9999" $width={25}>Res</LevelButton>
          <LevelButton $color="#99ff99" $width={33}>Supp</LevelButton>
        </LevelButtons>
        <Counter>967</Counter>
        <Grip />
      </Plot>
      <Axis>
        <MainAxis />
        <AutoButton>A</AutoButton>
      </Axis>
    </PaneRow>
    <PaneRow $height={63} $line>
      <Plot>
        <RsiPane />
        <Grip />
        <Grip $bottom />
      </Plot>
      <Axis>
        <RsiAxis />
        <AutoButton>A</AutoButton>
      </Axis>
    </PaneRow>
    <PaneRow $height={88} $line>
      <Plot>
        <VolumePane />
      </Plot>
      <Axis>
        <VolumeAxis />
        <AutoButton>A</AutoButton>
      </Axis>
    </PaneRow>
    <TimeRow>
      <SymbolBox>
        <SymbolName>YM #F</SymbolName>
        <SymbolArrow />
      </SymbolBox>
      <TimeAxis>
        <TimeScale />
      </TimeAxis>
      <RefreshButton>
        <RotateCw size={15} strokeWidth={2.6} />
      </RefreshButton>
      <PlusButton>+</PlusButton>
    </TimeRow>
  </Page>
);

export default App;
